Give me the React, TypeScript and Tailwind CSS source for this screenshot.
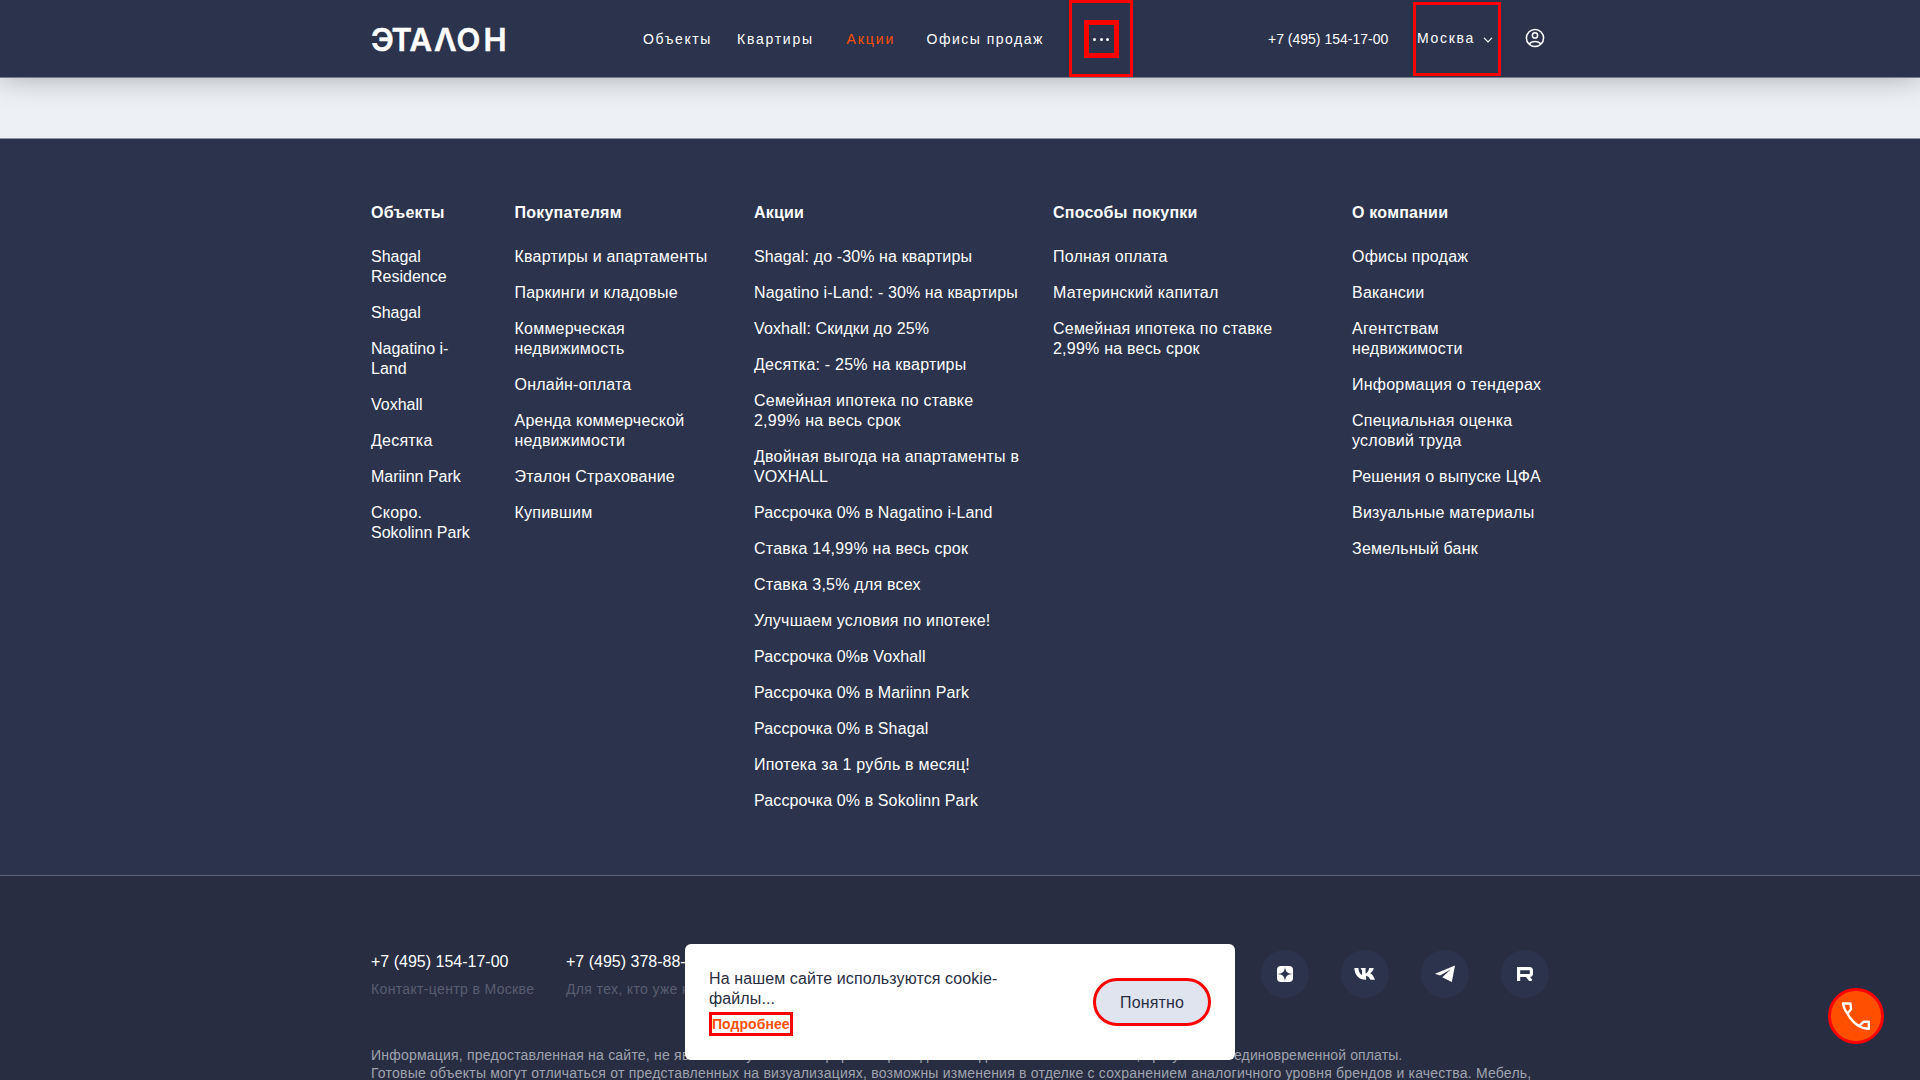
type Column = { title: string; width: string; items: string[] };

const columns: Column[] = [
  {
    title: 'Объекты',
    width: 'w-[143.5px]',
    items: ['Shagal\nResidence', 'Shagal', 'Nagatino i-\nLand', 'Voxhall', 'Десятка', 'Mariinn Park', 'Скоро.\nSokolinn Park'],
  },
  {
    title: 'Покупателям',
    width: 'w-[239.5px]',
    items: [
      'Квартиры и апартаменты',
      'Паркинги и кладовые',
      'Коммерческая\nнедвижимость',
      'Онлайн-оплата',
      'Аренда коммерческой\nнедвижимости',
      'Эталон Страхование',
      'Купившим',
    ],
  },
  {
    title: 'Акции',
    width: 'w-[299px]',
    items: [
      'Shagal: до -30% на квартиры',
      'Nagatino i-Land: - 30% на квартиры',
      'Voxhall: Скидки до 25%',
      'Десятка: - 25% на квартиры',
      'Семейная ипотека по ставке\n2,99% на весь срок',
      'Двойная выгода на апартаменты в\nVOXHALL',
      'Рассрочка 0% в Nagatino i-Land',
      'Ставка 14,99% на весь срок',
      'Ставка 3,5% для всех',
      'Улучшаем условия по ипотеке!',
      'Рассрочка 0%в Voxhall',
      'Рассрочка 0% в Mariinn Park',
      'Рассрочка 0% в Shagal',
      'Ипотека за 1 рубль в месяц!',
      'Рассрочка 0% в Sokolinn Park',
    ],
  },
  {
    title: 'Способы покупки',
    width: 'w-[299px]',
    items: ['Полная оплата', 'Материнский капитал', 'Семейная ипотека по ставке\n2,99% на весь срок'],
  },
  {
    title: 'О компании',
    width: 'w-[197px]',
    items: [
      'Офисы продаж',
      'Вакансии',
      'Агентствам\nнедвижимости',
      'Информация о тендерах',
      'Специальная оценка\nусловий труда',
      'Решения о выпуске ЦФА',
      'Визуальные материалы',
      'Земельный банк',
    ],
  },
];

function trackingFor(text: string) {
  const latin = /[A-Za-z]/.test(text);
  const cyrillic = /[А-Яа-я]/.test(text);
  if (latin && !cyrillic) return 'tracking-normal';
  if (latin) return 'tracking-[0.12px]';
  return 'tracking-[0.22px]';
}

function Logo() {
  return (
    <svg width="138" height="40" viewBox="0 0 138 40" className="shrink-0">
      <g
        fill="#fff"
        stroke="#fff"
        strokeWidth="0.5"
        fontFamily="Inter, 'Liberation Sans', sans-serif"
        fontSize="31"
        fontWeight="600"
      >
        <text x="0 20.4 38.6 63 85.600 112.6" y="32">
          ЭТАΛОН
        </text>
      </g>
    </svg>
  );
}

function Header() {
  return (
    <header className="relative z-10 h-[78px] border-b border-[#767c8c] bg-[#2c344d] shadow-[0_0_30px_rgba(0,0,0,0.3)]">
      <div className="mx-auto flex h-[77px] w-[1178px] items-center text-[14px] leading-5 whitespace-nowrap text-white">
        <Logo />
        <nav className="ml-[134px] flex w-[426px] shrink-0 items-center">
          <a className="w-[94px] tracking-[1.6px]">Объекты</a>
          <a className="w-[109.5px] tracking-[1.75px]">Квартиры</a>
          <a className="w-[80px] tracking-[1.9px] text-[#ff4f00]">Акции</a>
          <a className="tracking-[1.5px]">Офисы продаж</a>
        </nav>
        <button className="flex h-[77px] w-16 shrink-0 items-center justify-center border-[3px] border-[#ff0000]">
          <span className="flex h-[38px] w-[35px] items-center justify-center gap-[3.5px] border-[5px] border-[#ff0000] pt-[2px]">
            <i className="size-[3px] rounded-full bg-white" />
            <i className="size-[3px] rounded-full bg-white" />
            <i className="size-[3px] rounded-full bg-white" />
          </span>
        </button>
        <a className="ml-[135px] w-[145px] shrink-0">+7 (495) 154-17-00</a>
        <button className="flex h-[74px] w-[88px] shrink-0 items-center border-[3px] border-[#ff0000] pb-0.5 pl-px tracking-[1.7px]">
          Москва
          <svg width="10" height="6" viewBox="0 0 10 6" className="mt-1 ml-[8px]" fill="none" stroke="#fff" strokeWidth="1.2">
            <path d="M1 .8 5 4.8 9 .8" />
          </svg>
        </button>
        <svg width="20" height="20" viewBox="0 0 20 20" className="-mt-[2px] ml-6 shrink-0" fill="none" stroke="#fff" strokeWidth="1.5">
          <circle cx="10" cy="10" r="8.6" />
          <circle cx="10" cy="7.4" r="2.6" />
          <path d="M4.2 16.1c1.3-1.7 3.3-2.5 5.8-2.5s4.5.8 5.8 2.5" />
        </svg>
      </div>
    </header>
  );
}

function LinkColumn({ title, width, items }: Column) {
  return (
    <section className={`${width} shrink-0`}>
      <h3 className="mb-6 font-bold tracking-[0.22px]">{title}</h3>
      <ul className="flex flex-col gap-4">
        {items.map((item) => (
          <li key={item} className="whitespace-pre">
            {item.split('\n').map((line) => (
              <span key={line} className={`block ${trackingFor(line)}`}>
                {line}
              </span>
            ))}
          </li>
        ))}
      </ul>
    </section>
  );
}

function Socials() {
  return (
    <div className="flex gap-8 pt-px">
      <a className="flex size-12 items-center justify-center rounded-full bg-[#2c344d]">
        <svg width="16" height="16" viewBox="0 0 16 16">
          <rect width="16" height="16" rx="4" fill="#fff" />
          <path d="M8 0c.1 5.500 2.300 7.900 8 8-5.700.1-7.900 2.500-8 8-.1-5.500-2.300-7.900-8-8 5.700-.1 7.900-2.500 8-8Z" fill="#2c344d" />
        </svg>
      </a>
      <a className="flex size-12 items-center justify-center rounded-full bg-[#2c344d]">
        <svg width="22" height="12" viewBox="0 0 22 12" fill="#fff">
          <path d="M12 11.700C4.900 11.700.8 7.300.3 0h4.100c.3 4.200 1.900 6.300 3.600 6.900V2.600L6.700.6C6.700.2 7 0 7.400 0h4.200v5.500c1.300-.2 3-2.300 3.700-5.500h4.500c-.5 2.400-2.100 4.300-3.700 5.300 1.700.9 3.500 2.600 4.900 6.400h-4.600c-.9-2.100-2.500-3.700-4.300-4v4Z" />
        </svg>
      </a>
      <a className="flex size-12 items-center justify-center rounded-full bg-[#2c344d]">
        <svg width="22" height="18" viewBox="0 0 22 18" fill="#fff">
          <path d="M1 8.700 21 .5 17.800 17 8.300 12.300 16.600 4.500 6 10.600Z" />
        </svg>
      </a>
      <a className="flex size-12 items-center justify-center rounded-full bg-[#2c344d]">
        <svg width="16" height="14" viewBox="0 0 16 14" fill="none" stroke="#fff" strokeWidth="3.200">
          <path d="M1.600 14V1.600h10.800q2 0 2 2v2.900q0 2-2 2h-10.800M9.800 8.500l4.400 5.500" />
        </svg>
      </a>
    </div>
  );
}

function CookieNotice() {
  return (
    <aside className="absolute top-[944px] left-[685px] flex h-[116px] w-[550px] items-center justify-between rounded-md bg-white pr-6 pl-6 leading-5 text-[#282d42]">
      <div className="pt-px">
        <p className="mb-[3px] tracking-[0.11px] whitespace-pre">{'На нашем сайте используются cookie-\nфайлы...'}</p>
        <a className="inline-block h-6 w-[84px] border-[3px] border-[#ff0000] text-[14px] leading-[19px] font-bold tracking-[0.06px] text-[#ff4f00]">
          Подробнее
        </a>
      </div>
      <button className="h-12 w-[118px] rounded-full border-[3px] border-[#ff0000] bg-[#e0e4ef] pt-0.5 tracking-[0.15px]">
        Понятно
      </button>
    </aside>
  );
}

export default function App() {
  return (
    <div className="relative h-[1080px] w-full overflow-hidden bg-[#edf0f5] font-['Liberation_Sans',sans-serif] text-[16px] leading-5">
      <Header />
      <div className="h-[60px]" />
      <footer className="text-white">
        <div className="h-[738px] border-t border-b border-t-[#8d92a0] border-b-[#5d6378] bg-[#2c344d] pt-[64px]">
          <div className="mx-auto flex w-[1178px]">
            {columns.map((c) => (
              <LinkColumn key={c.title} {...c} />
            ))}
          </div>
        </div>
        <div className="h-[204px] bg-[#282d42] pt-[73px]">
          <div className="mx-auto w-[1178px]">
            <div className="flex">
              <div className="w-[195px] pt-[3px] whitespace-nowrap">
                <p>+7 (495) 154-17-00</p>
                <p className="mt-[7px] text-[14px] tracking-[0.35px] text-[#5a5e6e]">Контакт-центр в Москве</p>
              </div>
              <div className="w-[695px] pt-[3px] whitespace-nowrap">
                <p>+7 (495) 378-88-88</p>
                <p className="mt-[7px] text-[14px] tracking-[0.35px] text-[#5a5e6e]">Для тех, кто уже купил</p>
              </div>
              <Socials />
            </div>
            <div className="mt-[47px] text-[14px] leading-[18px] tracking-[0.213px] whitespace-nowrap text-[#a0a3ad]">
              <p className="flex">
                <span className="w-[863px] shrink-0">
                  Информация, предоставленная на сайте, не является публичной офертой. Цены даны на день начала заселения, при условии
                </span>
                <span className="tracking-[0.12px]">единовременной оплаты.</span>
              </p>
              <p>
                Готовые объекты могут отличаться от представленных на визуализациях, возможны изменения в отделке с сохранением
                аналогичного уровня брендов и качества. Мебель,
              </p>
            </div>
          </div>
        </div>
      </footer>
      <CookieNotice />
      <button className="absolute top-[988px] left-[1828px] flex size-14 items-center justify-center rounded-full border-[3px] border-[#ff0000] bg-[#ff4f00]">
        <svg width="30" height="30" viewBox="0 0 30 30" fill="none" stroke="#fff" strokeWidth="2.400" strokeLinejoin="round">
          <path d="M2 2.500h7.500l.5 5.700-3.500 4.300Q3.500 9.500 2 2.500ZM27.800 20.800v6.900q-5 .1-9.800-2.500l4.500-4.400ZM6.500 12.500Q10.500 20.500 18 25.200" />
        </svg>
      </button>
    </div>
  );
}
